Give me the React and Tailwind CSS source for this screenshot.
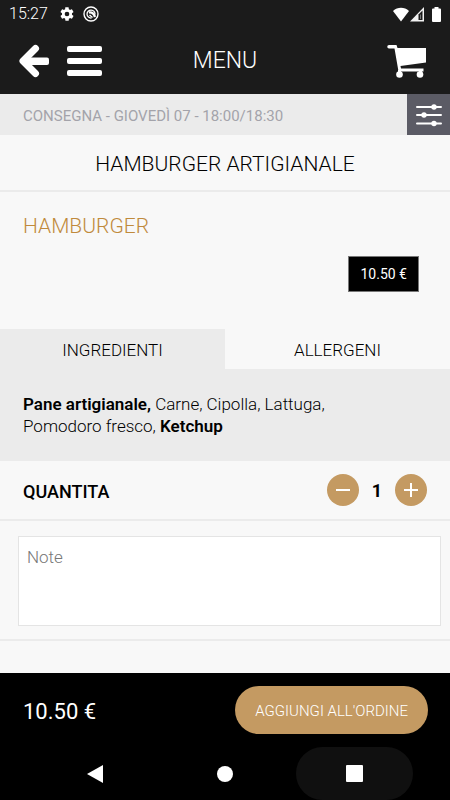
import { useState } from 'react';

function StatusBar() {
  return (
    <div className="flex h-7 items-center justify-between pl-[9px] pr-2 text-white">
      <div className="flex items-center">
        <span className="w-[50px] text-base leading-7 font-light">15:27</span>
        <svg className="h-4 w-4" viewBox="0 0 24 24" fill="currentColor">
          <path d="M19.4 13c.1-.3.1-.7.1-1s0-.7-.1-1l2.100-1.700c.2-.1.2-.4.1-.6l-2-3.500c-.1-.2-.4-.3-.6-.2l-2.500 1c-.5-.4-1.100-.7-1.700-1l-.4-2.600c0-.2-.2-.4-.5-.4h-4c-.2 0-.4.2-.5.4L9.200 5c-.6.200-1.200.600-1.700 1L5 5c-.2-.1-.5 0-.6.200l-2 3.500c-.1.200-.1.400.1.600L4.600 11c0 .3-.1.700-.1 1s0 .7.100 1l-2.100 1.700c-.2.100-.2.400-.1.600l2 3.500c.1.200.4.300.6.200l2.500-1c.5.400 1.100.7 1.700 1l.4 2.600c0 .200.200.400.500.400h4c.2 0 .4-.2.5-.4L14.800 19c.6-.2 1.200-.6 1.700-1l2.500 1c.2.100.5 0 .6-.2l2-3.500c.1-.2.1-.4-.1-.6zM12 15.500A3.500 3.500 0 1 1 12 8.500a3.500 3.500 0 0 1 0 7z" />
        </svg>
        <svg className="ml-2 h-4 w-4" viewBox="0 0 16 16" fill="none" stroke="currentColor">
          <circle cx="8" cy="8" r="7" strokeWidth="1.400" />
          <path d="M8.500 12A4 4 0 1 1 12 8.500" strokeWidth="1.300" />
          <path d="M6 6.500C9 6 11 8 12 11" strokeWidth="2.400" />
          <path d="M6.500 9l3 2.500" strokeWidth="1.400" />
        </svg>
      </div>
      <div className="flex items-center">
        <svg className="h-[15px] w-4" viewBox="0 0 16 15" fill="currentColor">
          <path d="M0 4C4.500-.2 11.500-.2 16 4L8 14.500z" />
        </svg>
        <svg className="ml-px h-[15px] w-[14px]" viewBox="0 0 14 15">
          <path d="M0 14.500L14 0v14.500z" fill="#f2f2f2" />
          <path d="M8.500 13V7.500l4-4V13z" fill="#1b1b1b" />
          <path d="M10 12V8l1-1v5z" fill="#777" />
        </svg>
        <svg className="ml-2 mr-px h-[15px] w-[9px]" viewBox="0 0 9 15" fill="currentColor">
          <path d="M2.500 1.500V0h4v1.500H8q1 0 1 1V14q0 1-1 1H1q-1 0-1-1V2.500q0-1 1-1z" />
        </svg>
      </div>
    </div>
  );
}

function Header() {
  return (
    <header className="grid h-[66px] grid-cols-[1fr_auto_1fr] items-center px-[18px] text-white">
      <div className="flex items-center gap-[17px]">
        <button type="button" aria-label="Indietro">
          <svg className="h-[34px] w-8" viewBox="0 0 32 34" fill="none" stroke="currentColor" strokeLinejoin="round">
            <path d="M17.500 4.500L5 17l12.500 12.500" strokeWidth="7" strokeLinecap="round" />
            <rect x="6" y="13.500" width="25" height="7.500" rx="2" fill="currentColor" stroke="none" />
          </svg>
        </button>
        <button type="button" aria-label="Menu" className="flex w-[35px] flex-col gap-[6px]">
          <span className="h-[6px] w-full rounded-xs bg-white" />
          <span className="h-[6px] w-full rounded-xs bg-white" />
          <span className="h-[6px] w-full rounded-xs bg-white" />
        </button>
      </div>
      <h1 className="text-[23px] font-light">MENU</h1>
      <button type="button" aria-label="Carrello" className="mr-[6px] justify-self-end">
        <svg className="h-[34px] w-[39px]" viewBox="0 0 39 34" fill="currentColor">
          <path d="M2 1h7.500l1 3H39v14.500L13.500 22l.5 2.500h22.500v3H11.500L7.500 4.500H2A1.750 1.750 0 0 1 2 1z" />
          <circle cx="12.500" cy="30.500" r="3.300" />
          <circle cx="33" cy="30.500" r="3.300" />
          <path d="M11 26h3v3h-3zM32 25h3v4h-3z" />
        </svg>
      </button>
    </header>
  );
}

function QuantityButton({ label, onClick, plus }) {
  return (
    <button
      type="button"
      aria-label={label}
      onClick={onClick}
      className="flex h-8 w-8 items-center justify-center rounded-full bg-[#c49a62] text-white"
    >
      <svg className="h-[14px] w-[14px]" viewBox="0 0 14 14" stroke="currentColor" strokeWidth="2">
        <path d={plus ? 'M0 7h14M7 0v14' : 'M0 7h14'} />
      </svg>
    </button>
  );
}

export default function App() {
  const [tab, setTab] = useState('ingredienti');
  const [quantity, setQuantity] = useState(1);

  return (
    <div className="flex min-h-screen flex-col bg-[#f8f8f8] font-[Roboto,sans-serif] text-black">
      <div className="bg-[#1b1b1b]">
        <StatusBar />
        <Header />
      </div>

      <main className="flex flex-1 flex-col">
        <div className="flex h-[41px] items-center justify-between bg-[#ebebeb]">
          <p className="pl-[23px] pt-1 text-[15px] text-[#a3a3aa]">CONSEGNA - GIOVEDÌ 07 - 18:00/18:30</p>
          <button type="button" aria-label="Filtri" className="flex h-full w-[43px] items-center justify-center bg-[#5b5b65] text-white">
            <svg className="h-6 w-[26px]" viewBox="0 0 26 24" fill="currentColor" stroke="currentColor" strokeWidth="2" strokeLinecap="round">
              <path d="M1 4h24M1 12h24M1 20.500h24" />
              <g stroke="none">
                <circle cx="18" cy="4" r="2.700" />
                <circle cx="8" cy="12" r="2.700" />
                <circle cx="18" cy="20.500" r="2.700" />
              </g>
            </svg>
          </button>
        </div>

        <h2 className="border-b-2 border-[#ebebeb] pt-[3px] text-center text-[21px] leading-[52px] font-light">HAMBURGER ARTIGIANALE</h2>

        <section className="flex flex-col px-[23px] pt-5 pb-[37px]">
          <h3 className="text-[21px] leading-7 font-light text-[#c08a3c]">HAMBURGER</h3>
          <p className="mt-4 mr-2 self-end border border-[#777] bg-black px-[11px] pt-px text-sm leading-[33px] text-white">10.50 €</p>
        </section>

        <div role="tablist" className="grid grid-cols-2">
          <button
            type="button"
            role="tab"
            aria-selected={tab === 'ingredienti'}
            onClick={() => setTab('ingredienti')}
            className={tab === 'ingredienti' ? 'h-10 bg-[#ebebeb] pt-1 text-[17px] font-light' : 'h-10 pt-1 text-[17px] font-light'}
          >
            INGREDIENTI
          </button>
          <button
            type="button"
            role="tab"
            aria-selected={tab === 'allergeni'}
            onClick={() => setTab('allergeni')}
            className={tab === 'allergeni' ? 'h-10 bg-[#ebebeb] pt-1 text-[17px] font-light' : 'h-10 pt-1 text-[17px] font-light'}
          >
            ALLERGENI
          </button>
        </div>
        <div role="tabpanel" className="bg-[#ebebeb] px-[23px] py-6 text-[17px] leading-[22px] font-light">
          <p>
            <b className="font-semibold">Pane artigianale,</b> Carne, Cipolla, Lattuga,
            <br />
            Pomodoro fresco, <b className="font-semibold">Ketchup</b>
          </p>
        </div>

        <section className="flex h-[60px] items-center justify-between border-b-2 border-[#ebebeb] px-[23px]">
          <h3 className="pt-1 text-lg font-medium">QUANTITA</h3>
          <div className="flex items-center">
            <QuantityButton label="Diminuisci" onClick={() => setQuantity(Math.max(1, quantity - 1))} />
            <span className="w-9 pt-[2px] text-center text-lg font-bold">{quantity}</span>
            <QuantityButton label="Aumenta" onClick={() => setQuantity(quantity + 1)} plus />
          </div>
        </section>

        <div className="border-b-2 border-[#ebebeb] pt-[15px] pr-[9px] pb-[13px] pl-[18px]">
          <textarea
            aria-label="Note"
            placeholder="Note"
            className="block h-[90px] w-full resize-none border border-[#e4e4e4] bg-white px-2 py-2 text-[17px] font-light outline-none placeholder:text-[#777]"
          />
        </div>
      </main>

      <footer className="bg-black text-white">
        <div className="flex h-[74px] items-center justify-between pr-[22px] pl-[23px]">
          <p className="pt-[2px] text-[22px]">10.50 €</p>
          <button type="button" className="h-12 rounded-full bg-[#c49a62] px-5 pt-[2px] text-[15px] font-light">AGGIUNGI ALL'ORDINE</button>
        </div>
        <nav className="grid h-[53px] grid-cols-[1fr_117px_1fr] items-center pl-9 pr-[37px]">
          <button type="button" aria-label="Indietro" className="flex h-full w-[117px] items-center justify-center">
            <svg className="h-[18px] w-4" viewBox="0 0 16 18" fill="currentColor">
              <path d="M0 9L16 0v18z" />
            </svg>
          </button>
          <button type="button" aria-label="Home" className="flex h-full items-center justify-center">
            <span className="h-4 w-4 rounded-full bg-white" />
          </button>
          <button type="button" aria-label="App recenti" className="flex h-full w-[117px] items-center justify-center justify-self-end rounded-full bg-[#101010]">
            <span className="h-[17px] w-[17px] rounded-[1px] bg-white" />
          </button>
        </nav>
      </footer>
    </div>
  );
}
